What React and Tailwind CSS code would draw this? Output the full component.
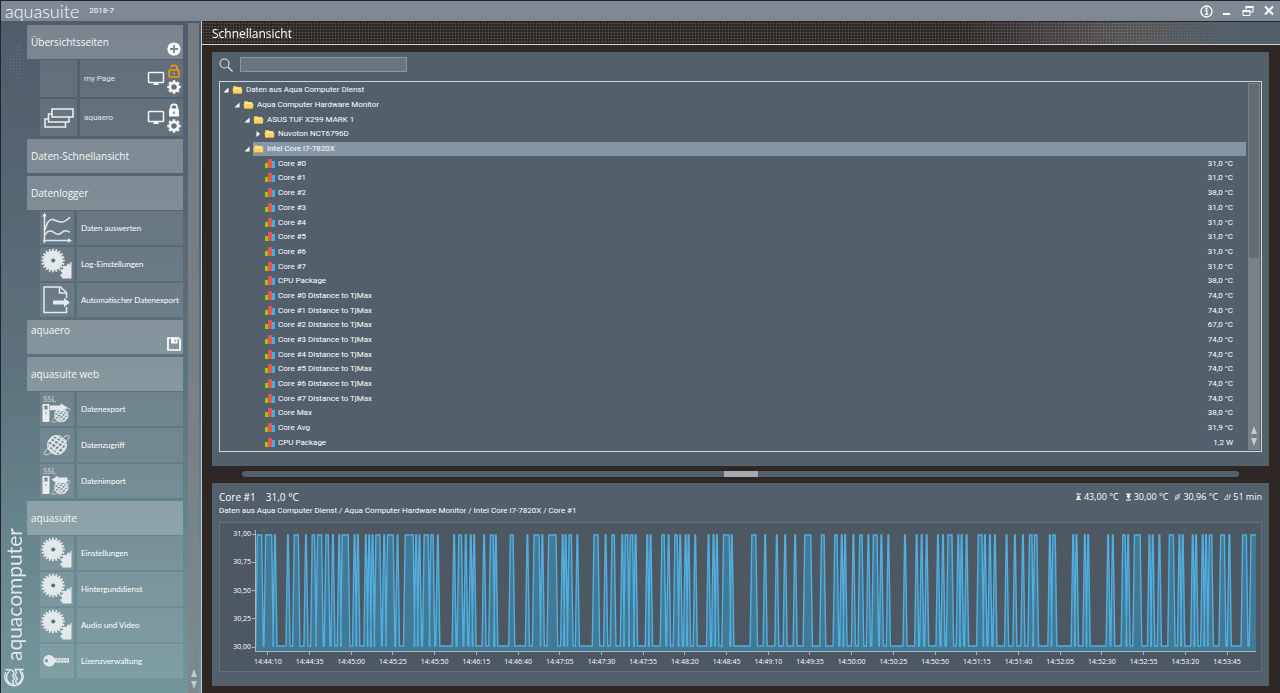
import { useState } from 'react'

const GEAR_TEETH = Array.from({ length: 20 }, (_, i) => i * 18)

const GearsIcon = () => (
  <svg viewBox="0 0 34 34" className="size-full" fill="#e3e8eb">
    <circle cx="13" cy="13.5" r="9.8" />
    {GEAR_TEETH.map((a) => (
      <rect key={a} x="12.1" y="1.7" width="1.8" height="4" transform={`rotate(${a} 13 13.5)`} />
    ))}
    <circle cx="13.2" cy="13.5" r="2" fill="#5f6f7a" />
    <path d="M31.500 15V31.500H22.200V30L20.500 29.500V27.300L22.300 26.800L22 25.300L20.600 24.500V22.500L22.500 22.400L23.300 21.200L22.500 19.700L24 18.400L25.600 19.300L27 18.500L27 16.800L29 16.400L29.800 17.900L30.500 15Z" />
  </svg>
)

const CurvesIcon = () => (
  <svg viewBox="0 0 34 34" className="size-full" fill="none" stroke="#e3e8eb" strokeWidth="1.5">
    <path d="M4.500 32V4M3 29.500H29" />
    <path d="M4.500 1.500L6.800 5.500H2.200ZM32 29.500L28 31.800V27.200Z" fill="#e3e8eb" stroke="none" />
    <path d="M5 19C7 11 9 8.500 12 8.500C16 8.500 17 11.500 22 11C26 10.500 28 7.500 30 6.500" />
    <path d="M5 24C7 21 8 19.500 11 20C14 20.500 15 23.500 18.500 23.300C22 23 22 20 25 19.700C27 19.500 28 20.500 30 21" />
  </svg>
)

const ExportIcon = () => (
  <svg viewBox="0 0 34 34" className="size-full" fill="none" stroke="#e3e8eb" strokeWidth="1.5">
    <path d="M26.500 15V9.500L20.500 4H4V29.500H26.500V24" />
    <path d="M19.500 4V10H26" />
    <path d="M13 17.500H24V15L30 19.500L24 24V21.500H13Z" fill="#e3e8eb" stroke="none" />
  </svg>
)

const Globe = () => (
  <g fill="none" stroke="#dfe6e9" strokeWidth="1">
    <circle cx="17" cy="17" r="9.500" />
    <path d="M9 12L25 22M8 16L21 25.500M11 9L26.500 18M15 7.500L26 14M8 20L16 26" strokeWidth="1.700" />
    <path d="M23 10L11 24M19 8L8.500 20M26 13L15 26M26.500 18L20 26M14 8L8.500 14" strokeWidth="1.700" />
    <path d="M9 19C4.500 24 3 27 5.500 26.800C10 26.500 18 21 23 16.500C28 12 30.500 8.500 28.500 7.700C27.500 7.300 25.500 8 24 8.800" strokeWidth="0.900" />
  </g>
)

const GlobeIcon = () => (
  <svg viewBox="0 0 34 34" className="size-full">
    <Globe />
  </svg>
)

const SslIcon = ({ incoming }) => (
  <svg viewBox="0 0 34 34" className="size-full">
    <g transform="translate(9 11) scale(0.72)">
      <Globe />
    </g>
    <rect x="2.500" y="12" width="7" height="18" rx="1" fill="#e9edef" />
    <rect x="4.500" y="13.500" width="3" height="4" fill="#73868f" />
    <circle cx="6" cy="21" r="0.800" fill="#73868f" />
    <path
      d={incoming ? 'M27.500 13.500H18V11.500L11.500 15.800L18 20V18.300H27.500Z' : 'M10 13.500H20.500V11.300L28 15.800L20.500 20V18.300H10Z'}
      fill="#e3e8eb"
    />
    <text x="3" y="9.500" fontSize="8" fill="#c9d3d8" fontFamily="Lato, sans-serif">SSL</text>
  </svg>
)

const KeyIcon = () => (
  <svg viewBox="0 0 34 34" className="size-full" fill="#e3e8eb">
    <path
      fillRule="evenodd"
      d="M9 11C11.800 11 13.500 12.500 14.300 14.300H29V19H27.500V18H26V19H24.500V18H23V19H21.500V18H20V19H18.500V18.500H14.600C13.800 21 12 22.500 9 22.500C5.700 22.500 3.300 20 3.300 16.800C3.300 13.500 5.700 11 9 11ZM6.500 15.100A1.700 1.700 0 1 0 6.500 18.500A1.700 1.700 0 1 0 6.500 15.100Z"
    />
    <path d="M16 16.200H28" stroke="#76909a" strokeWidth="0.700" />
  </svg>
)

const PagesIcon = () => (
  <svg viewBox="0 0 37 37" className="size-full" fill="#69757f" stroke="#eef1f3" strokeWidth="1.5">
    <path d="M12 10H33V18H12Z" />
    <path d="M12 15H8.500V23H29V18M8.500 20H5V28H25.500V23" fill="none" />
  </svg>
)

const MonitorIcon = () => (
  <svg viewBox="0 0 18 16" className="h-4 w-[18px]" fill="none" stroke="#f1f3f4" strokeWidth="1.5">
    <rect x="1.500" y="1.500" width="15" height="10" rx="0.800" />
    <path d="M6 14L7 12H11L12 14Z" fill="#f1f3f4" stroke="none" />
  </svg>
)

const CogIcon = () => (
  <svg viewBox="0 0 14 14" className="size-[14px]" fill="none" stroke="#fff">
    <circle cx="7" cy="7" r="4" strokeWidth="2.400" />
    {[0, 45, 90, 135, 180, 225, 270, 315].map((a) => (
      <path key={a} d="M7 0.300V3" strokeWidth="2.600" transform={`rotate(${a} 7 7)`} />
    ))}
  </svg>
)

const LockIcon = ({ open }) =>
  open ? (
    <svg viewBox="0 0 12 14" className="h-[14px] w-3" fill="none" stroke="#f29d05" strokeWidth="1.6">
      <rect x="1.200" y="6" width="9.600" height="7" rx="0.500" />
      <path d="M3 3.500C3.300 0.800 8.700 0.200 9 3.500V6M6 8.500V10.500" />
    </svg>
  ) : (
    <svg viewBox="0 0 12 14" className="h-[14px] w-3" fill="#fff">
      <rect x="1" y="5.500" width="10" height="8" rx="0.800" />
      <path d="M3 6V4C3 0.500 9 0.500 9 4V6" fill="none" stroke="#fff" strokeWidth="1.600" />
      <path d="M6 8.500V11" stroke="#66727d" strokeWidth="1.400" />
    </svg>
  )

const PlusIcon = () => (
  <svg viewBox="0 0 14 14" className="size-[14px]">
    <circle cx="7" cy="7" r="6.600" fill="#fff" />
    <path d="M7 3V11M3 7H11" stroke="#7c8791" strokeWidth="1.800" />
  </svg>
)

const SaveIcon = () => (
  <svg viewBox="0 0 14 14" className="size-[14px]">
    <path d="M1 1H11.500L13 2.500V13H1Z" fill="none" stroke="#fff" strokeWidth="1.700" />
    <path d="M4 1H10.500V6.500H4Z" fill="#fff" />
    <path d="M8 2.500V5" stroke="#84939b" strokeWidth="1.200" />
  </svg>
)

const FolderIcon = () => (
  <svg viewBox="0 0 11 10" className="h-[10px] w-[11px] shrink-0">
    <path d="M1 1H4.500L5.500 2H9.500V5H1Z" fill="#e8b93a" />
    <path d="M2 2.500H9V5H2Z" fill="#fff6d0" />
    <path d="M0.500 3.800H10.500L9.800 8.800H1.300Z" fill="#f7d468" />
    <path d="M1.200 8H10L9.800 9H1.300Z" fill="#dca22b" />
  </svg>
)

const BarsIcon = () => (
  <svg viewBox="0 0 11 10" className="h-[10px] w-[11px] shrink-0">
    <rect x="0" y="4" width="3" height="5" fill="#9bc60f" />
    <rect x="3" y="0" width="4" height="9" fill="#e2584c" />
    <rect x="7" y="2" width="3" height="7" fill="#45b0e8" />
  </svg>
)

const LogoMark = () => (
  <svg viewBox="0 0 20 20" className="size-5" fill="none" stroke="#e2ebed" strokeWidth="1.3">
    <path d="M2 5A9.200 9.200 0 1 0 18 5" />
    <path d="M5.500 4.200C1.500 7.500 1.500 13 5.500 16C7 17.200 8.500 17.300 10 17.200L8.500 14L11 11.500L8.500 9L10 5.500L8 3.200L1.500 2.500" />
    <path d="M11 2.500H18.500L16 4.500C19 8 18.500 13 15 15.700L13 16.800L11.500 14.500L13.500 11.500L11 8.500L12.500 5.500Z" />
  </svg>
)

const ScrollArrows = () => (
  <div className="flex flex-col items-center gap-1 pb-1">
    <button aria-label="Nach oben">
      <svg viewBox="0 0 6 8" className="h-2 w-[6px]" fill="#c0cbd0"><path d="M3 0L6 8H0Z" /></svg>
    </button>
    <button aria-label="Nach unten">
      <svg viewBox="0 0 6 8" className="h-2 w-[6px]" fill="#c0cbd0"><path d="M3 8L6 0H0Z" /></svg>
    </button>
  </div>
)

const sections = [
  { title: 'Daten-Schnellansicht', items: [] },
  {
    title: 'Datenlogger',
    items: [
      ['Daten auswerten', <CurvesIcon />],
      ['Log-Einstellungen', <GearsIcon />],
      ['Automatischer Datenexport', <ExportIcon />]
    ]
  },
  { title: 'aquaero', save: true, items: [] },
  {
    title: 'aquasuite web',
    items: [
      ['Datenexport', <SslIcon />],
      ['Datenzugriff', <GlobeIcon />],
      ['Datenimport', <SslIcon incoming />]
    ]
  },
  {
    title: 'aquasuite',
    items: [
      ['Einstellungen', <GearsIcon />],
      ['Hintergunddienst', <GearsIcon />],
      ['Audio und Video', <GearsIcon />],
      ['Lizenzverwaltung', <KeyIcon />]
    ]
  }
]

const folders = [
  { label: 'Daten aus Aqua Computer Dienst', pad: 'pl-[3px]', open: true },
  { label: 'Aqua Computer Hardware Monitor', pad: 'pl-[14px]', open: true },
  { label: 'ASUS TUF X299 MARK 1', pad: 'pl-[24px]', open: true },
  { label: 'Nuvoton NCT6796D', pad: 'pl-[35px]', open: false },
  { label: 'Intel Core i7-7820X', pad: 'pl-[24px]', open: true, selected: true }
]

const sensors = [
  ['Core #0', '31,0 °C'],
  ['Core #1', '31,0 °C'],
  ['Core #2', '38,0 °C'],
  ['Core #3', '31,0 °C'],
  ['Core #4', '31,0 °C'],
  ['Core #5', '31,0 °C'],
  ['Core #6', '31,0 °C'],
  ['Core #7', '31,0 °C'],
  ['CPU Package', '38,0 °C'],
  ['Core #0 Distance to TjMax', '74,0 °C'],
  ['Core #1 Distance to TjMax', '74,0 °C'],
  ['Core #2 Distance to TjMax', '67,0 °C'],
  ['Core #3 Distance to TjMax', '74,0 °C'],
  ['Core #4 Distance to TjMax', '74,0 °C'],
  ['Core #5 Distance to TjMax', '74,0 °C'],
  ['Core #6 Distance to TjMax', '74,0 °C'],
  ['Core #7 Distance to TjMax', '74,0 °C'],
  ['Core Max', '38,0 °C'],
  ['Core Avg', '31,9 °C'],
  ['CPU Package', '1,2 W']
]

const times = [
  '14:44:10', '14:44:35', '14:45:00', '14:45:25', '14:45:50', '14:46:15', '14:46:40', '14:47:05',
  '14:47:30', '14:47:55', '14:48:20', '14:48:45', '14:49:10', '14:49:35', '14:50:00', '14:50:25',
  '14:50:50', '14:51:15', '14:51:40', '14:52:05', '14:52:30', '14:52:55', '14:53:20', '14:53:45'
]

// Intervals at 31 °C, five units per second; a single number is one sample
const pulses = [
  [4, 17], [29, 47], 57, 96, [115, 127], 150, [169, 176], [185, 197], [210, 217], 231, 250, [259, 277],
  296, 306, 330, 340, 350, [360, 372], 385, [395, 412], 425, [448, 472], 481, 491, [505, 517], [525, 532],
  546, 595, [609, 617], 630, 645, 655, 685, [704, 712], 720, [764, 772], 815, [835, 850], 860,
  [879, 901], 921, 930, [940, 947], 965, [1015, 1027], 1050, [1069, 1076], 1100, [1109, 1116],
  [1124, 1131], 1140, 1175, 1185, [1219, 1226], 1239, [1258, 1265], 1274, 1290, 1299, 1319, 1359, 1374,
  1384, [1404, 1421], 1429, [1489, 1501], 1529, 1564, 1589, 1619, [1648, 1666], [1698, 1706],
  [1738, 1745], 1759, 1769, 1794, [1813, 1820], 1839, [1854, 1865], 1878, 1899, 1949,
  1984, 1999, 2014, 2048, 2063, [2078, 2090], 2109, 2119, 2134, [2169, 2180], 2189, 2204, 2219, 2254,
  2279, 2303, [2323, 2330], [2338, 2345], 2384, [2393, 2400], 2454, 2464, 2489, 2499, 2559, 2573,
  [2603, 2610], 2619, [2638, 2655], 2683, 2693, 2713, [2743, 2755], 2773, 2783, 2813, 2823, 2843, 2853,
  [2863, 2870], [2897, 2908], 2923, [2963, 2974], [2988, 3003]
]

const line = pulses
  .map((p) => {
    const [a, b] = Array.isArray(p) ? p : [p - 1, p + 1]
    return `L${a - 5} 117L${a} 5L${b} 5${b < 3003 ? `L${b + 5} 117` : ''}`
  })
  .join('')

const HeadTile = ({ title, action, top }) => (
  <div className={`flex h-[34px] bg-white/25 pl-1 pr-[2px] text-[#f4f7f8] ${top ? 'items-start' : 'items-center'}`}>
    <a href="#" className={`flex-1 text-[10px] leading-4 ${top ? 'pt-[2px]' : ''}`}>{title}</a>
    {action && <div className="self-end pb-[3px]">{action}</div>}
  </div>
)

const PageItem = ({ name, icon, open }) => (
  <li className="ml-[13px] flex h-[37px] gap-[3px]">
    <div className="w-[37px] bg-white/10">{icon}</div>
    <div className="flex flex-1 items-center bg-white/10 pl-1 pr-[2px]">
      <a href="#" className="flex-1 font-[Roboto] text-[8px] text-[#e3e8ea]">{name}</a>
      <button aria-label="Auf Desktop anzeigen" className="pr-[2px]"><MonitorIcon /></button>
      <div className="flex flex-col items-center gap-[2px]">
        <button aria-label="Sperren"><LockIcon open={open} /></button>
        <button aria-label="Einstellungen"><CogIcon /></button>
      </div>
    </div>
  </li>
)

const Sidebar = () => (
  <aside className="flex w-[201px] shrink-0 border-r border-[#b8cdd2] bg-linear-to-b from-[#505c69] via-[#5c717b] to-[#73969b]">
    <div className="flex w-[26px] shrink-0 flex-col items-center justify-between pb-[6px] pt-4">
      <button
        aria-label="Menü einklappen"
        className="h-[50px] w-4 bg-[radial-gradient(#8593a0_35%,transparent_40%)] bg-[size:3px_3px] opacity-50 [clip-path:polygon(100%_0,100%_100%,0_50%)]"
      />
      <div className="flex flex-col items-center gap-[6px]">
        <span className="rotate-180 font-[Lato] text-[21px] leading-5 text-[#dce8ea] [writing-mode:vertical-rl]">
          aquacomputer
        </span>
        <LogoMark />
      </div>
    </div>
    <nav className="flex min-w-0 flex-1 flex-col gap-[3px] pt-1">
      <section className="flex flex-col gap-px">
        <HeadTile title="Übersichtsseiten" action={<button aria-label="Seite hinzufügen" className="block"><PlusIcon /></button>} />
        <ul className="flex flex-col gap-[2px]">
          <PageItem name="my Page" open />
          <PageItem name="aquaero" icon={<PagesIcon />} />
        </ul>
      </section>
      {sections.map((s) => (
        <section key={s.title} className="flex flex-col gap-px">
          <HeadTile
            title={s.title}
            top={s.save}
            action={s.save && <button aria-label="Speichern" className="block"><SaveIcon /></button>}
          />
          {s.items.length > 0 && (
            <ul className="flex flex-col gap-[2px]">
              {s.items.map(([label, icon]) => (
                <li key={label}>
                  <a href="#" className="ml-[13px] flex h-[34px] gap-[3px]">
                    <span className="w-[34px] shrink-0 bg-white/10">{icon}</span>
                    <span className="flex flex-1 items-center whitespace-nowrap bg-white/10 pl-1 font-[Lato] text-[8px] text-white">
                      {label}
                    </span>
                  </a>
                </li>
              ))}
            </ul>
          )}
        </section>
      ))}
    </nav>
    <div className="ml-[5px] mr-[2px] mt-[2px] flex w-[11px] shrink-0 flex-col justify-end bg-[#7e8487]/80">
      <ScrollArrows />
    </div>
  </aside>
)

const TitleBar = () => (
  <header className="flex h-5 items-center bg-linear-to-b from-[#7f8a96] to-[#7d8892] pl-1 pr-[5px] text-white">
    <h1 className="font-[Lato] text-[18px] font-light leading-4">aquasuite</h1>
    <span className="ml-[10px] flex-1 font-[Roboto] text-[8px]">2018-7</span>
    <div className="flex items-center gap-[9px]">
      <button aria-label="Info">
        <svg viewBox="0 0 13 13" className="size-[13px]" fill="none" stroke="#fff" strokeWidth="1.3">
          <circle cx="6.500" cy="6.500" r="5.500" />
          <path d="M5.200 5.500H6.800V9.300M5 9.400H8.300" />
          <circle cx="6.500" cy="3.500" r="0.500" fill="#fff" />
        </svg>
      </button>
      <button aria-label="Minimieren">
        <svg viewBox="0 0 11 12" className="h-3 w-[11px]"><rect x="1" y="8" width="7" height="2" fill="#fff" /></svg>
      </button>
      <button aria-label="Verkleinern">
        <svg viewBox="0 0 12 12" className="size-3" fill="none" stroke="#fff">
          <path d="M4 5V2H11V7H8.500" /><path d="M3.500 2H11.500" strokeWidth="2" />
          <path d="M1 6H8V10.500H1Z" /><path d="M0.500 6H8.500" strokeWidth="2" />
        </svg>
      </button>
      <button aria-label="Schließen">
        <svg viewBox="0 0 12 12" className="size-3" stroke="#fff" strokeWidth="2"><path d="M2 1.500L10 9.500M10 1.500L2 9.500" /></svg>
      </button>
    </div>
  </header>
)

const TreePanel = () => {
  const [query, setQuery] = useState('')

  return (
    <section className="flex min-h-0 flex-1 flex-col bg-[#53606c] px-[7px] pb-[14px] pt-[5px]">
      <div className="flex items-center gap-[7px]">
        <label htmlFor="search" aria-label="Suche">
          <svg viewBox="0 0 14 14" className="size-[14px]" fill="none" stroke="#e2e6e8" strokeWidth="1.1">
            <circle cx="5.500" cy="5.500" r="4.500" /><path d="M9 9L13.500 13.500" />
          </svg>
        </label>
        <input
          id="search"
          value={query}
          onChange={(e) => setQuery(e.target.value)}
          className="h-[15px] w-[167px] border border-[#8d979f] bg-[#6a757f] px-1 text-[8px] outline-none"
        />
      </div>
      <div className="mt-[9px] flex min-h-0 flex-1 border border-[#ccd6dc] py-px pr-px">
        <ul className="flex flex-1 flex-col font-[Roboto] text-[8px] leading-[10px] text-white">
          {folders.map((f) => (
            <li key={f.label} className={`flex flex-1 items-center ${f.pad}`}>
              <button aria-label={f.open ? 'Zuklappen' : 'Aufklappen'} className="w-[9px]">
                <svg viewBox="0 0 6 6" className="size-[6px]" fill="#fff">
                  <path d={f.open ? 'M5.500 0.500V5.500H0.500Z' : 'M1.500 0L5 3L1.500 6Z'} />
                </svg>
              </button>
              <span className={`flex flex-1 items-center gap-[3px] self-stretch ${f.selected ? 'bg-[#8597a5]' : ''}`}>
                <FolderIcon />
                {f.label}
              </span>
            </li>
          ))}
          {sensors.map(([name, value], i) => (
            <li key={i} className="flex flex-1 items-center gap-[2px] pl-[45px] pr-[13px]">
              <BarsIcon />
              <span className="flex-1">{name}</span>
              <span>{value}</span>
            </li>
          ))}
        </ul>
        <div className="ml-[2px] flex w-3 flex-col bg-[#7a7f88]">
          <div className="h-[176px] border border-[#7a7f88] bg-[#666b73]" />
          <div className="flex flex-1 items-end justify-center"><ScrollArrows /></div>
        </div>
      </div>
    </section>
  )
}

const Stat = ({ icon, children }) => (
  <span className="flex items-center gap-[2px]">
    <svg viewBox="0 0 7 8" className="h-2 w-[7px]" fill="#fff" stroke="#fff" strokeWidth="0">{icon}</svg>
    {children}
  </span>
)

const ChartPanel = () => (
  <section className="bg-[#53606c] px-[7px] pb-[14px] pt-[6px] text-white">
    <div className="flex items-center text-[9px] leading-4">
      <h3 className="mr-[10px] text-[10px]">Core #1</h3>
      <span className="flex-1 text-[10px]">31,0 °C</span>
      <div className="flex gap-[6px]">
        <Stat icon={<path d="M1 0.500H6V1.500H1ZM3.500 2L5.500 4.500H4.500V6H6V7H1V6H2.500V4.500H1.500Z" />}>43,00 °C</Stat>
        <Stat icon={<path d="M1 6.500H6V7.500H1ZM1 0.500H6V1.500H4.700V3H5.500L3.500 6L1.500 3H2.300V1.500H1Z" />}>30,00 °C</Stat>
        <Stat icon={<path d="M0.500 7.500L6.500 0.500M3.500 1.800C5 1.800 5.600 3 5.200 4.200C4.600 6.600 1.500 6.800 1.600 4.500C1.700 3 2.500 1.800 3.500 1.800Z" fill="none" strokeWidth="0.800" />}>30,96 °C</Stat>
        <Stat icon={<path d="M0.300 6.500H4L3.500 1.500ZM6 1L5.300 6.500M4.700 3H6.800" fill="none" strokeWidth="0.600" />}>51 min</Stat>
      </div>
    </div>
    <p className="mt-px font-[Roboto] text-[8px] leading-[10px]">
      Daten aus Aqua Computer Dienst / Aqua Computer Hardware Monitor / Intel Core i7-7820X / Core #1
    </p>
    <div className="mt-[6px] flex border border-[#65727e] bg-[#4e5863] pb-[5px] pr-[5px] pt-[7px] text-[7px] font-medium leading-[8px]">
      <div className="flex h-[122px] w-[35px] flex-col justify-between pb-[1px]">
        {['31,00', '30,75', '30,50', '30,25', '30,00'].map((v) => (
          <div key={v} className="flex items-center justify-end gap-px">
            {v}
            <i className="h-px w-[3px] bg-[#a9b4bb]" />
          </div>
        ))}
      </div>
      <div className="min-w-0 flex-1">
        <svg viewBox="0 0 3003 122" preserveAspectRatio="none" className="block h-[122px] w-full border-b border-l border-[#a9b4bb]">
          <path d={`M0 122V117${line}V122Z`} fill="#427a96" />
          <path d={`M0 117${line}`} fill="none" stroke="#53aee0" strokeWidth="1.400" vectorEffect="non-scaling-stroke" />
        </svg>
        <div className="-ml-2 mr-2 flex">
          {times.map((t) => (
            <div key={t} className="flex min-w-0 flex-1 flex-col items-center">
              <i className="mb-[3px] h-[3px] w-px bg-[#a9b4bb]" />
              {t}
            </div>
          ))}
        </div>
      </div>
    </div>
  </section>
)

const App = () => {
  return (
    <div className="flex h-screen min-h-[693px] flex-col border-l border-t border-[#25252b] bg-[#2e2726] font-['Open_Sans','Noto_Sans',sans-serif]">
      <TitleBar />
      <div className="flex min-h-0 flex-1 bg-[#2e2726]">
        <Sidebar />
        <main className="flex min-w-0 flex-1 flex-col pb-[7px]">
          <div className="mt-px border-b border-[#c9d3d5] bg-linear-to-r from-transparent from-70% via-[#555454] via-86% to-[#53606c] to-96%">
            <div className="bg-[radial-gradient(#ffffff3d_35%,transparent_50%)] bg-[size:3px_3px] pl-[10px] pt-[2px] [mask-image:linear-gradient(to_right,black_85%,transparent_97%)]">
              <h2 className="text-[12px] leading-5 text-white">Schnellansicht</h2>
            </div>
          </div>
          <div className="flex min-h-0 flex-1 flex-col pl-[10px] pr-[11px] pt-[7px]">
            <TreePanel />
            <div role="separator" className="mx-[30px] mb-[6px] mt-[5px] flex h-[6px] justify-center rounded-sm bg-[#53606c]">
              <div className="w-[34px] bg-[#aaa9ad]" />
            </div>
            <ChartPanel />
          </div>
        </main>
      </div>
    </div>
  )
}

export default App
